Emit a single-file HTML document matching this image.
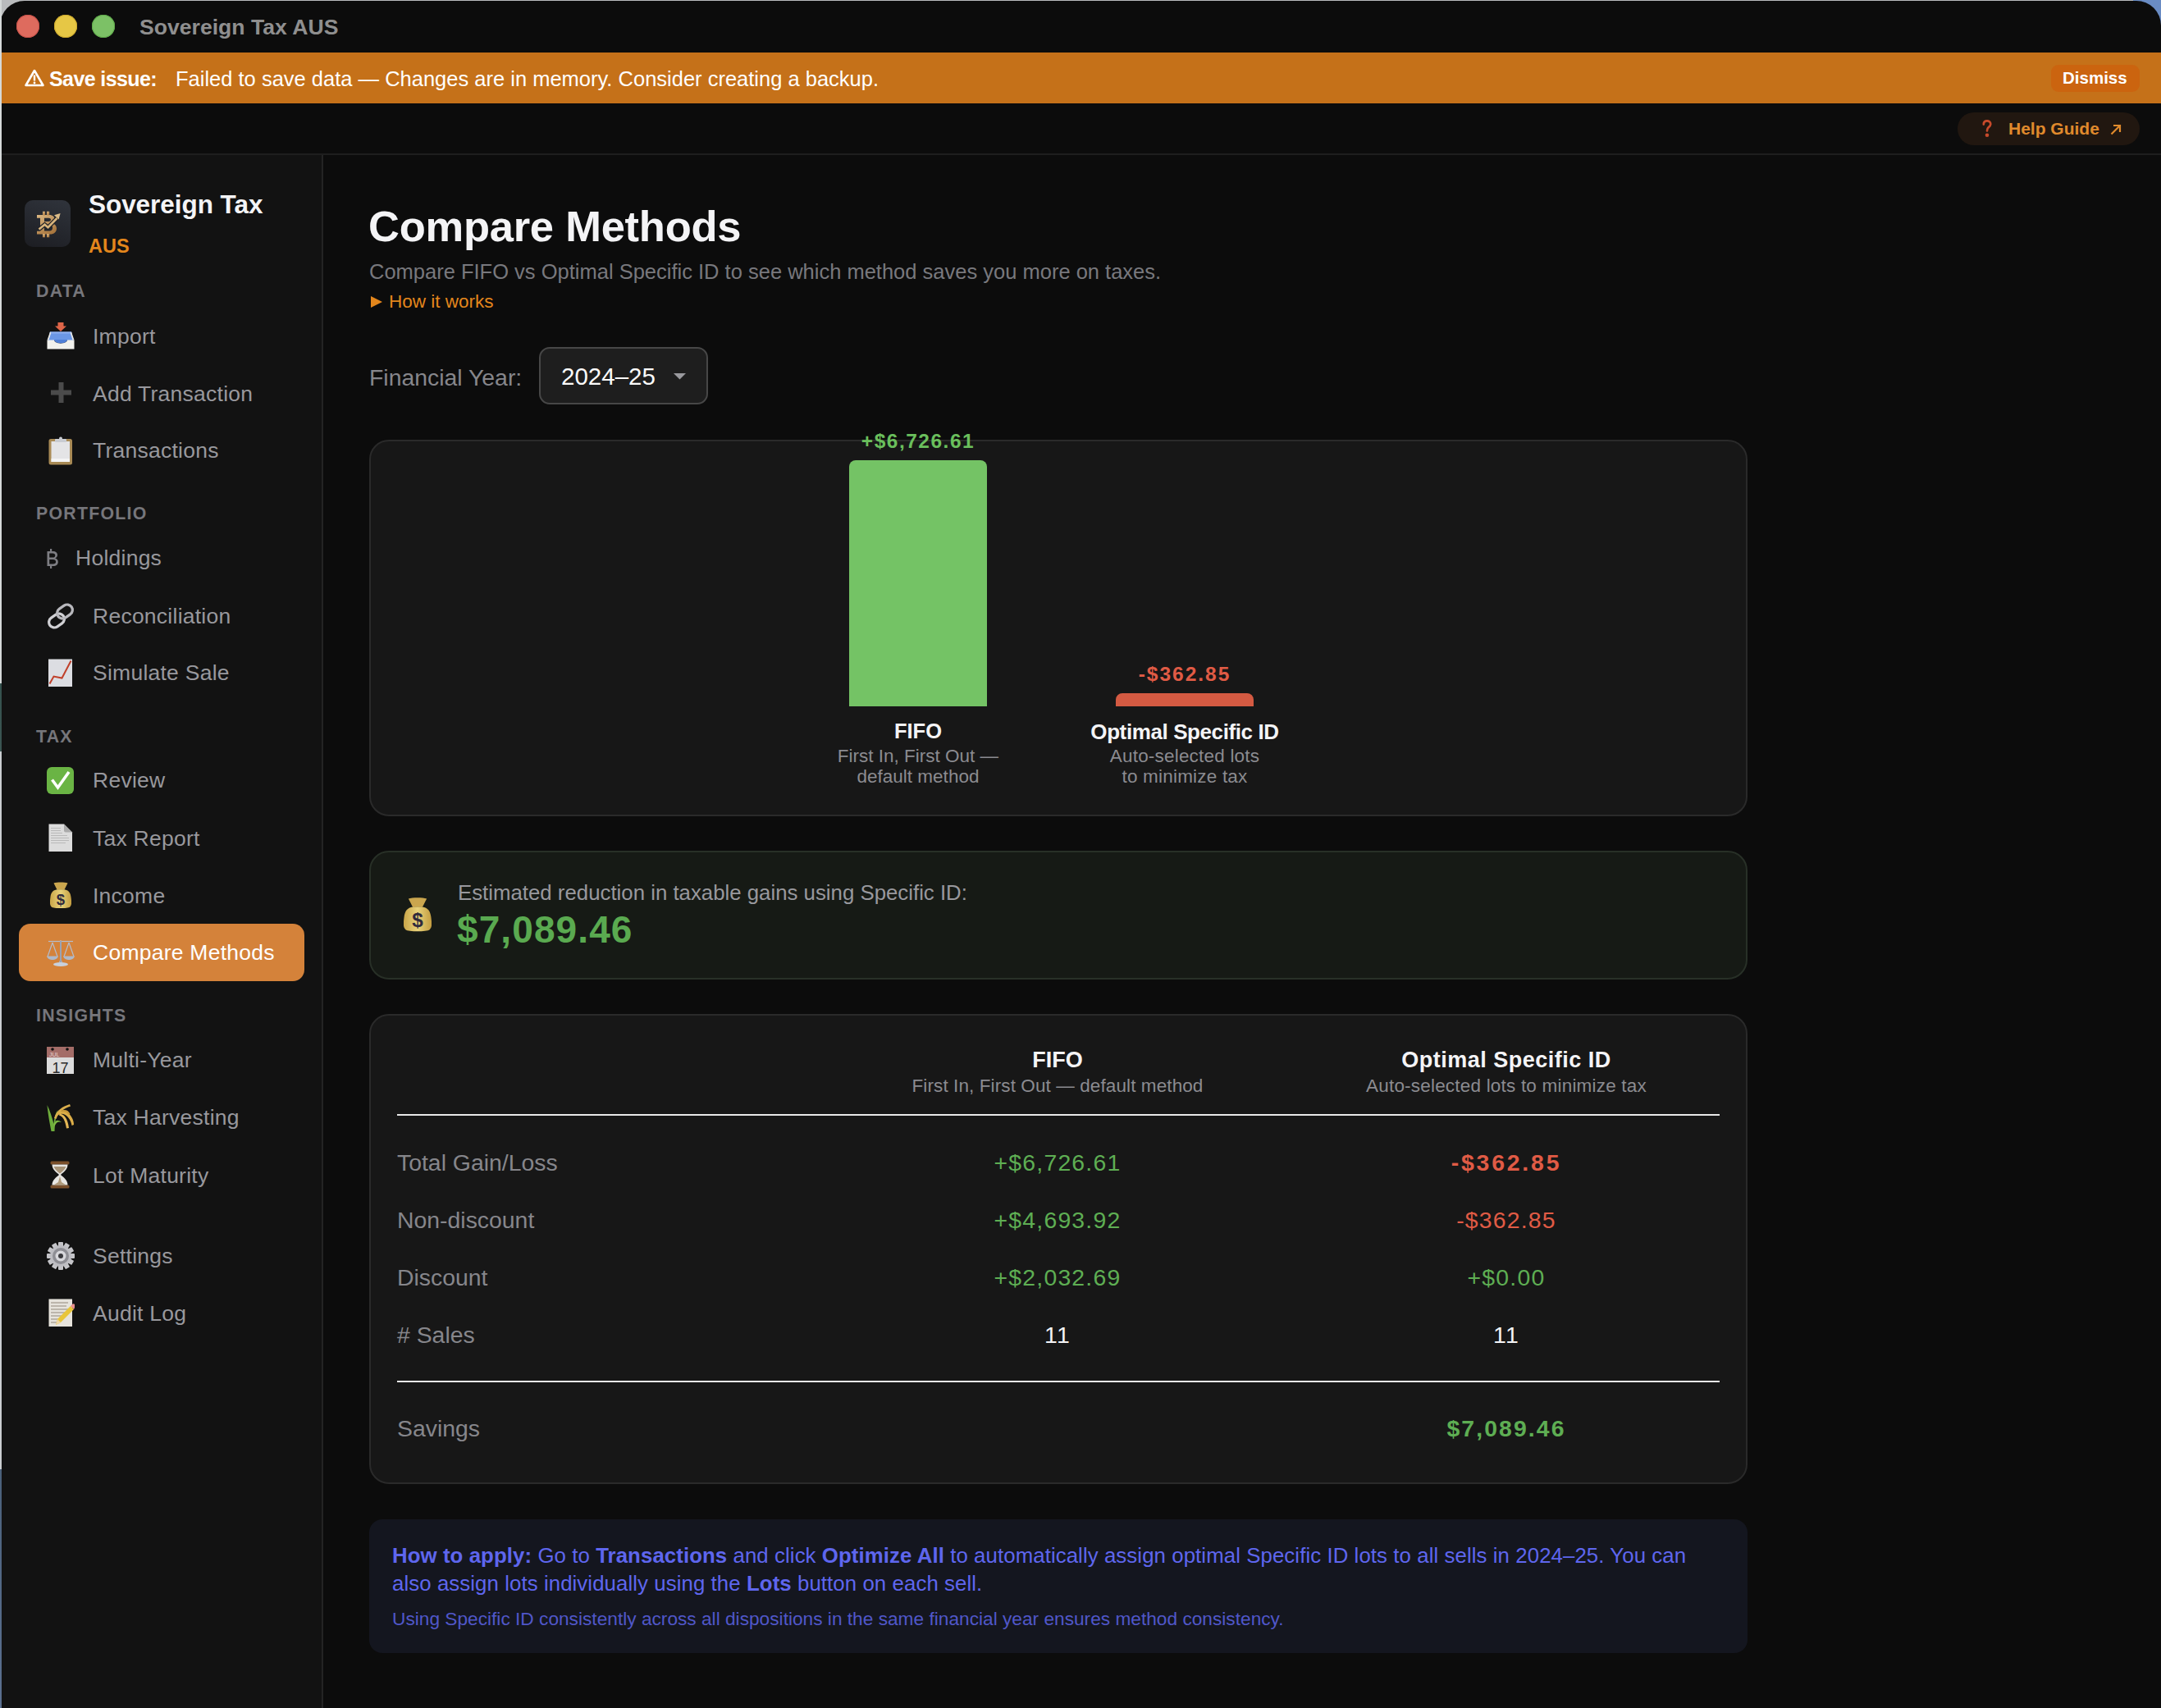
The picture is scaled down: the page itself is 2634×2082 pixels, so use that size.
<!DOCTYPE html>
<html><head><meta charset="utf-8">
<style>
*{box-sizing:border-box;margin:0;padding:0}
html,body{width:2634px;height:2082px;overflow:hidden;background:#b9bbbd;font-family:"Liberation Sans",sans-serif}
.a{position:absolute;white-space:nowrap;line-height:1}
#win{position:absolute;left:0;top:1px;width:2634px;height:2081px;background:#0c0c0c;border-radius:30px 30px 0 0;overflow:hidden}
#tr{position:absolute;left:2600px;top:0;width:34px;height:34px;background:#6a8cc4}
#strip{position:absolute;left:0;top:0;width:2px;height:2082px;background:linear-gradient(#d5d9d9 0,#d5d9d9 40%,#35524e 40%,#3b5552 44%,#c9cdd0 44%,#c9cdd0 86%,#4a607a 86%,#5b7090 100%)}
#side{position:absolute;left:0;top:188px;width:394px;height:1894px;background:#121212;border-right:2px solid #242424}
.sh{position:absolute;left:44px;font-weight:700;font-size:21.3px;letter-spacing:1.25px;color:#76767b;line-height:1;white-space:nowrap}
.it{position:absolute;left:113px;font-size:26.5px;letter-spacing:0.25px;color:#98989d;line-height:1;white-space:nowrap}
.ic{position:absolute}
.card{position:absolute;left:450px;width:1680px;background:#171717;border:2px solid #2a2a2a;border-radius:24px}
.g{color:#5eae53}.r{color:#e05b45}
</style></head><body>
<div id="tr"></div><div id="win">
  <!-- title bar -->
  <div class="a" style="left:20px;top:17px;width:28px;height:28px;border-radius:50%;background:#de6b5e;box-shadow:inset 0 0 0 1px #c9524a"></div>
  <div class="a" style="left:66px;top:17px;width:28px;height:28px;border-radius:50%;background:#e6c745;box-shadow:inset 0 0 0 1px #cda92c"></div>
  <div class="a" style="left:112px;top:17px;width:28px;height:28px;border-radius:50%;background:#7cc166;box-shadow:inset 0 0 0 1px #5fab4a"></div>
  <div class="a" style="left:170px;top:19px;font-weight:700;font-size:26.6px;color:#8f8f8f">Sovereign Tax AUS</div>

  <!-- banner -->
  <div class="a" style="left:0;top:63px;width:2634px;height:62px;background:#c57119"></div>
  <svg class="a" style="left:30px;top:83px" width="24" height="22" viewBox="0 0 24 22"><path d="M12 2 L22.5 20 H1.5 Z" fill="none" stroke="#fff" stroke-width="2.6" stroke-linejoin="round"/><rect x="10.8" y="7.5" width="2.4" height="7" fill="#fff"/><circle cx="12" cy="17" r="1.4" fill="#fff"/></svg>
  <div class="a" style="left:60px;top:83px;font-weight:700;font-size:25px;letter-spacing:-0.6px;color:#fff">Save issue:</div>
  <div class="a" style="left:214px;top:83px;font-size:25.5px;color:#fff">Failed to save data — Changes are in memory. Consider creating a backup.</div>
  <div class="a" style="left:2500px;top:78px;width:108px;height:33px;border-radius:9px;background:#cb640f"></div>
  <div class="a" style="left:2514px;top:84px;font-weight:700;font-size:20.5px;color:#fff">Dismiss</div>

  <!-- toolbar -->
  <div class="a" style="left:2386px;top:136px;width:222px;height:40px;border-radius:20px;background:#211710"></div>
  <svg class="a" style="left:2416px;top:145px" width="12" height="22" viewBox="0 0 12 22"><path d="M1.8 5.6 C1.8 2.8 3.6 1.3 6 1.3 C8.6 1.3 10.3 3 10.3 5.2 C10.3 7.3 9 8.3 7.6 9.4 C6.5 10.3 6 11.3 6 13.4" fill="none" stroke="#c74a2b" stroke-width="2.7" stroke-linecap="round"/><circle cx="6" cy="18.8" r="2.3" fill="#c74a2b"/></svg>
  <div class="a" style="left:2448px;top:145px;font-weight:700;font-size:21px;color:#e08a2c">Help Guide</div>
  <svg class="a" style="left:2571px;top:149px" width="16" height="16" viewBox="0 0 16 16"><path d="M2.5 13.5 L13 3 M5 3 H13 V11" fill="none" stroke="#e08a2c" stroke-width="2.2"/></svg>
  <div class="a" style="left:0;top:186px;width:2634px;height:2px;background:#1e1e1e"></div>

  <!-- sidebar -->
  <div id="side"></div>
  <div class="a" style="left:30px;top:243px;width:56px;height:57px;border-radius:10px;background:linear-gradient(200deg,#30343c,#1c1d22)"></div>
  <svg class="a" style="left:30px;top:243px" width="56" height="56" viewBox="0 0 56 56">
    <defs><linearGradient id="gold" x1="0" y1="0" x2="0.6" y2="1"><stop offset="0" stop-color="#dcb883"/><stop offset="1" stop-color="#a9773f"/></linearGradient></defs>
    <g fill="url(#gold)">
    <path fill-rule="evenodd" d="M15 18 H30 C34.5 18 36.5 20.5 36.5 23 C36.5 25.5 34.8 27.3 32.5 27.9 C36.8 28.6 39 31.2 39 34.5 C39 38.5 36 41.6 31 41.6 H15 V37.8 H19 V21.8 H15 Z M24 21.8 V25.9 H29.3 C30.9 25.9 32 25.1 32 23.8 C32 22.5 30.9 21.8 29.3 21.8 Z M24 30 V37.6 H30.5 C32.6 37.6 34.1 36.1 34.1 33.8 C34.1 31.5 32.6 30 30.5 30 Z"/>
    <rect x="22" y="13.7" width="3" height="4.6"/><rect x="27" y="13.7" width="3.2" height="4.6"/>
    <rect x="22" y="41" width="3" height="4.3"/><rect x="27" y="41" width="3.2" height="4.3"/>
    </g>
    <path d="M17.5 35.5 L24.5 29.8 L28.5 33.2 L39.5 22" fill="none" stroke="#202228" stroke-width="5.2"/>
    <path d="M17.5 35.5 L24.5 29.8 L28.5 33.2 L39.5 22" fill="none" stroke="#d8b47c" stroke-width="2.6"/>
    <path d="M36 18.2 L43.6 16 L41.6 23.6 Z" fill="#dcbd88"/>
  </svg>
  <div class="a" style="left:108px;top:233px;font-weight:700;font-size:31.5px;letter-spacing:-0.05px;color:#f4f4f6">Sovereign Tax</div>
  <div class="a" style="left:108px;top:288px;font-weight:700;font-size:23.5px;color:#e3861c">AUS</div>

  <div class="sh" style="top:344px">DATA</div>
  <div class="it" style="top:396px">Import</div>
  <div class="it" style="top:466px">Add Transaction</div>
  <div class="it" style="top:535px">Transactions</div>

  <div class="sh" style="top:615px">PORTFOLIO</div>
  <div class="it" style="top:666px;left:92px">Holdings</div>
  <div class="it" style="top:737px">Reconciliation</div>
  <div class="it" style="top:806px">Simulate Sale</div>

  <div class="sh" style="top:887px">TAX</div>
  <div class="it" style="top:937px">Review</div>
  <div class="it" style="top:1008px">Tax Report</div>
  <div class="it" style="top:1078px">Income</div>
  <div class="a" style="left:23px;top:1125px;width:348px;height:70px;border-radius:14px;background:#d4823a"></div>
  <div class="it" style="top:1147px;color:#fff">Compare Methods</div>

  <div class="sh" style="top:1227px">INSIGHTS</div>
  <div class="it" style="top:1278px">Multi-Year</div>
  <div class="it" style="top:1348px">Tax Harvesting</div>
  <div class="it" style="top:1419px">Lot Maturity</div>

  <div class="it" style="top:1517px">Settings</div>
  <div class="it" style="top:1587px">Audit Log</div>
    <!-- import tray -->
  <svg class="ic" style="left:56px;top:390px" width="36" height="36" viewBox="0 0 36 36">
    <path d="M14.5 2 H21.5 V6.5 H25 L18 13 L11 6.5 H14.5 Z" fill="#de6548"/>
    <path d="M5 13.5 H31 L33.5 24 H2.5 Z" fill="#6b97e6"/>
    <path d="M5 13.5 H31 L31.5 15.5 H4.5 Z" fill="#8fb0ee"/>
    <path d="M10 23 C10.5 29 25.5 29 26 23 Z" fill="#4f7fd8"/>
    <path d="M1.5 23.5 H10 C10.5 29 25.5 29 26 23.5 H34.5 V34.5 H1.5 Z" fill="#f1f1ed"/>
    <path d="M5 13.5 L1.5 23.5 H3.5 L6.3 14.8 Z M31 13.5 L34.5 23.5 H32.5 L29.7 14.8 Z" fill="#e9e9e5"/>
  </svg>
  <!-- plus -->
  <svg class="ic" style="left:62px;top:465px" width="25" height="25" viewBox="0 0 25 25"><path d="M9.5 0 H15.5 V9.5 H25 V15.5 H15.5 V25 H9.5 V15.5 H0 V9.5 H9.5 Z" fill="#4b4b4b"/></svg>
  <!-- clipboard -->
  <svg class="ic" style="left:59px;top:531px" width="30" height="35" viewBox="0 0 30 35">
    <rect x="0.5" y="3" width="28.5" height="31.5" rx="2.5" fill="#a88a55"/>
    <rect x="3.5" y="6" width="22.5" height="25" fill="#e4e4e6"/>
    <rect x="3.5" y="27" width="22.5" height="4" fill="#f4f4f4"/>
    <rect x="8" y="3" width="14" height="4" rx="1" fill="#c9ccd2"/>
    <circle cx="15" cy="2.5" r="2" fill="#c9ccd2"/>
  </svg>
  <!-- bitcoin glyph -->
  <svg class="ic" style="left:56px;top:667px" width="16" height="26" viewBox="0 0 16 26">
    <path fill="#7d7d82" fill-rule="evenodd" d="M1.5 4 H8.5 C12 4 14 5.8 14 8.6 C14 10.6 12.9 11.9 11.2 12.4 C13.4 12.9 14.8 14.5 14.8 16.9 C14.8 20 12.6 22 8.8 22 H1.5 Z M4.2 6.4 V11.6 H8.2 C10.2 11.6 11.3 10.6 11.3 9 C11.3 7.4 10.2 6.4 8.2 6.4 Z M4.2 13.9 V19.6 H8.6 C10.9 19.6 12.1 18.6 12.1 16.8 C12.1 14.9 10.9 13.9 8.6 13.9 Z"/>
    <rect x="5" y="1" width="2.2" height="3.5" fill="#7d7d82"/><rect x="5" y="21.5" width="2.2" height="3.5" fill="#7d7d82"/>
  </svg>
  <!-- link -->
  <svg class="ic" style="left:56px;top:732px" width="36" height="36" viewBox="0 0 36 36">
    <g fill="none" stroke-width="3.2">
      <rect x="3" y="17" width="20" height="13" rx="6.5" transform="rotate(-35 13 23.5)" stroke="#d0d0d4"/>
      <rect x="13" y="6" width="20" height="13" rx="6.5" transform="rotate(-35 23 12.5)" stroke="#b8b8bd"/>
    </g>
  </svg>
  <!-- chart -->
  <svg class="ic" style="left:59px;top:802px" width="30" height="35" viewBox="0 0 30 35">
    <rect x="0" y="0.5" width="29" height="33.5" fill="#dcdde2"/>
    <path d="M1.5 30.5 L6.5 21.5 L16.5 23.5 L27.5 2.5" fill="none" stroke="#c0402a" stroke-width="2"/>
  </svg>
  <!-- check -->
  <svg class="ic" style="left:57px;top:934px" width="34" height="34" viewBox="0 0 34 34">
    <rect x="0" y="0" width="33" height="33" rx="6" fill="#6ab444"/>
    <path d="M6.5 15.5 L13.5 25 L27 6" fill="none" stroke="#fff" stroke-width="3.6"/>
  </svg>
  <!-- page -->
  <svg class="ic" style="left:59px;top:1003px" width="30" height="35" viewBox="0 0 30 35">
    <path d="M0.5 0.5 H19 L29 10.5 V34 H0.5 Z" fill="#dcdcdc"/>
    <path d="M19 0.5 L29 10.5 H21 C19.8 10.5 19 9.7 19 8.5 Z" fill="#aaaaaa"/>
    <g fill="#b9b9b9"><rect x="3" y="5" width="12" height="1"/><rect x="3" y="8" width="12" height="1"/><rect x="3" y="11" width="14" height="1"/><rect x="3" y="14" width="20" height="1"/><rect x="3" y="17" width="22" height="1"/><rect x="3" y="20" width="22" height="1"/><rect x="3" y="23" width="18" height="1"/></g>
  </svg>
  <!-- money bag -->
  <svg class="ic" style="left:61px;top:1074px" width="26" height="33" viewBox="0 0 26 33"><defs><linearGradient id="bagg" x1="0" y1="0" x2="1" y2="0"><stop offset="0" stop-color="#c9a548"/><stop offset="0.5" stop-color="#e8d27a"/><stop offset="1" stop-color="#c29c40"/></linearGradient></defs>
    <path d="M4.5 1.5 C8 0.3 18 0.3 21.5 1.5 L17.5 9.5 H8.5 Z" fill="#caa64e"/>
    <path d="M8.5 9.2 H17.5 C22.5 10 25 13 25.6 19 C26.2 24 26.8 28 24.2 30.4 C21.5 32.6 4.5 32.6 1.8 30.4 C-0.8 28 -0.2 24 0.4 19 C1 13 3.5 10 8.5 9.2 Z" fill="url(#bagg)"/>
    <text x="13" y="28" text-anchor="middle" font-family="Liberation Sans" font-weight="700" font-size="18.5" fill="#2f2a3c">$</text>
  </svg>
  <!-- scales (active) -->
  <svg class="ic" style="left:57px;top:1144px" width="34" height="34" viewBox="0 0 34 34">
    <g stroke="#b5bccb" fill="none" stroke-width="1.2">
      <path d="M2 2.5 H32"/><path d="M17 1 V28"/>
      <path d="M7 4 L1 21 M7 4 L13 21 M27 4 L21 21 M27 4 L33 21"/>
    </g>
    <path d="M0 20.5 H14 C13 24 10 25 7 25 C4 25 1 24 0 20.5 Z" fill="#aeb8c8"/>
    <path d="M20 20.5 H34 C33 24 30 25 27 25 C24 25 21 24 20 20.5 Z" fill="#aeb8c8"/>
    <path d="M15.5 26 H18.5 L19 29 H15 Z" fill="#aeb8c8"/>
    <ellipse cx="17" cy="30.5" rx="9" ry="2.5" fill="#c8d0dc"/>
    <rect x="16" y="2" width="2" height="26" fill="#9aa3b4"/>
  </svg>
  <!-- calendar -->
  <svg class="ic" style="left:57px;top:1275px" width="34" height="34" viewBox="0 0 34 34">
    <rect x="0" y="0" width="33" height="13" fill="#a46d68"/>
    <rect x="0" y="13" width="33" height="20" fill="#dcdcdc"/>
    <circle cx="7" cy="3" r="1.8" fill="#111"/><circle cx="25" cy="3" r="1.8" fill="#111"/>
    <text x="3" y="11.5" font-family="Liberation Sans" font-size="7" fill="#e8d5d3">JUL</text>
    <text x="16.5" y="31.5" text-anchor="middle" font-family="Liberation Sans" font-size="18" fill="#2a2a2a">17</text>
  </svg>
  <!-- rice -->
  <svg class="ic" style="left:57px;top:1344px" width="34" height="36" viewBox="0 0 34 36">
    <path d="M5.5 34 C4 26 1.5 14 0.5 2 C4 9 6.5 17 8.5 25 C9 18 10.5 12 13.5 8 C11.5 15 10 23 9.5 34 Z" fill="#6fae3c"/>
    <path d="M8.5 26 C10 21 13 19 18 23 C14 21.5 11.5 23 9.5 28 Z" fill="#7fbb44"/>
    <path d="M9 18 C12 8 19 4 28 1 L29 3.5 C21 6 15 10 11.5 19 Z" fill="#d9ad4c"/>
    <path d="M12 13 C17 8 22 8 26 11.5 C30 15.5 33 20 33 26 L30.5 27 C29.5 21 26.5 16.5 22.5 14 C19 12 15.5 12.5 13 15 Z" fill="#dcae48"/>
    <path d="M15.5 12.5 C21 13 25.5 18 27 30 L24 30.5 C22.5 21 20 16 15 14.5 Z" fill="#e3b655"/>
    <path d="M18 8.5 C23 7 27 9 28.5 13 L26.5 14 C25 11 22 9.5 18.5 10.5 Z" fill="#c99a3a"/>
  </svg>
  <!-- hourglass -->
  <svg class="ic" style="left:61px;top:1414px" width="25" height="34" viewBox="0 0 25 34">
    <rect x="0.5" y="0.5" width="23" height="4" rx="1.5" fill="#7a4f2a"/>
    <rect x="0.5" y="29.5" width="23" height="4" rx="1.5" fill="#7a4f2a"/>
    <path d="M2.5 4.5 H21.5 C21.5 11 16 14 13 17 C16 20 21.5 23 21.5 29.5 H2.5 C2.5 23 8 20 11 17 C8 14 2.5 11 2.5 4.5 Z" fill="#e8e6e2"/>
    <path d="M4.5 7 H19.5 C18 11 15 13 12 15.5 C9 13 6 11 4.5 7 Z" fill="#a89478"/>
    <path d="M12 19 L14 26 L19.5 29.5 H4.5 L10 26 Z" fill="#b09a7a"/>
  </svg>
  <!-- gear -->
  <svg class="ic" style="left:56px;top:1512px" width="36" height="36" viewBox="0 0 36 36">
    <g transform="translate(18 18)">
      <g fill="#c4c4c8">
        <rect x="-3" y="-17" width="6" height="34" rx="1"/>
        <rect x="-3" y="-17" width="6" height="34" rx="1" transform="rotate(30)"/>
        <rect x="-3" y="-17" width="6" height="34" rx="1" transform="rotate(60)"/>
        <rect x="-3" y="-17" width="6" height="34" rx="1" transform="rotate(90)"/>
        <rect x="-3" y="-17" width="6" height="34" rx="1" transform="rotate(120)"/>
        <rect x="-3" y="-17" width="6" height="34" rx="1" transform="rotate(150)"/>
      </g>
      <circle r="13" fill="#bdbdc2"/>
      <circle r="10" fill="#8e8e94"/>
      <circle r="6.5" fill="#d8d8dc"/>
      <circle r="3" fill="#3a3a3e"/>
    </g>
  </svg>
  <!-- memo -->
  <svg class="ic" style="left:59px;top:1582px" width="32" height="35" viewBox="0 0 32 35">
    <rect x="0.5" y="0.5" width="28.5" height="33.5" fill="#e6e3dc"/>
    <g stroke="#8a8070" stroke-width="0.9"><path d="M3 5 H24"/><path d="M3 9 H22"/><path d="M3 13 H25"/><path d="M3 17 H20"/><path d="M3 21 H16"/><path d="M3 25 H12"/><path d="M3 29 H10"/></g>
    <path d="M9 32 L11 25 L27 9 L31 13 L15 29 Z" fill="#e8c53a"/>
    <path d="M27 9 L29 7 C30 6 31 6 32 7 L32.5 8 C33 9 33 10 32 11 L31 13 Z" fill="#e88d8d"/>
    <path d="M9 32 L11 25 L15 29 Z" fill="#f0d9a8"/>
  </svg>


    <!-- header -->
  <div class="a" style="left:449px;top:249px;font-weight:700;font-size:52.5px;letter-spacing:-0.25px;color:#f4f4f6">Compare Methods</div>
  <div class="a" style="left:450px;top:318px;font-size:25.5px;color:#78787d">Compare FIFO vs Optimal Specific ID to see which method saves you more on taxes.</div>
  <svg class="a" style="left:451px;top:359px" width="16" height="16" viewBox="0 0 16 16"><path d="M1 1 L15 8 L1 15 Z" fill="#e3861c"/></svg>
  <div class="a" style="left:474px;top:356px;font-size:22.5px;color:#e3861c">How it works</div>
  <div class="a" style="left:450px;top:445px;font-size:28.4px;color:#86868b">Financial Year:</div>
  <div class="a" style="left:657px;top:422px;width:206px;height:70px;border-radius:13px;background:#1e1e1e;border:2px solid #474747"></div>
  <div class="a" style="left:684px;top:443px;font-size:29.5px;color:#fafafa">2024–25</div>
  <svg class="a" style="left:821px;top:454px" width="15" height="8" viewBox="0 0 15 8"><path d="M0 0 H15 L7.5 7.5 Z" fill="#9a9a9e"/></svg>

  <!-- chart card -->
  <div class="card" style="top:535px;height:459px"></div>
  <div class="a" style="left:1035px;top:560px;width:168px;height:300px;border-radius:8px 8px 0 0;background:#74c365"></div>
  <div class="a" style="left:1360px;top:844px;width:168px;height:16px;border-radius:8px 8px 0 0;background:#d45a42"></div>
  <div class="a g" style="left:1019px;width:200px;text-align:center;top:525px;font-weight:700;font-size:24.5px;letter-spacing:1.5px;color:#6abf5c">+$6,726.61</div>
  <div class="a r" style="left:1344px;width:200px;text-align:center;top:809px;font-weight:700;font-size:24.5px;letter-spacing:2px">-$362.85</div>
  <div class="a" style="left:969px;width:300px;text-align:center;top:878px;font-weight:700;font-size:25.5px;color:#f4f4f6">FIFO</div>
  <div class="a" style="left:969px;width:300px;text-align:center;top:908px;font-size:22.5px;letter-spacing:0px;color:#8b8b90;line-height:25px;white-space:normal">First In, First Out —<br>default method</div>
  <div class="a" style="left:1244px;width:400px;text-align:center;top:878px;font-weight:700;font-size:26px;letter-spacing:-0.4px;color:#f4f4f6">Optimal Specific ID</div>
  <div class="a" style="left:1244px;width:400px;text-align:center;top:908px;font-size:22.5px;letter-spacing:0.2px;color:#8b8b90;line-height:25px;white-space:normal">Auto-selected lots<br>to minimize tax</div>

  <!-- savings card -->
  <div class="card" style="top:1036px;height:157px;background:#161a15;border-color:#283027"></div>
  <svg class="ic" style="left:492px;top:1092px" width="34" height="44" viewBox="0 0 26 33"><defs><linearGradient id="bagg" x1="0" y1="0" x2="1" y2="0"><stop offset="0" stop-color="#c9a548"/><stop offset="0.5" stop-color="#e8d27a"/><stop offset="1" stop-color="#c29c40"/></linearGradient></defs>
    <path d="M4.5 1.5 C8 0.3 18 0.3 21.5 1.5 L17.5 9.5 H8.5 Z" fill="#caa64e"/>
    <path d="M8.5 9.2 H17.5 C22.5 10 25 13 25.6 19 C26.2 24 26.8 28 24.2 30.4 C21.5 32.6 4.5 32.6 1.8 30.4 C-0.8 28 -0.2 24 0.4 19 C1 13 3.5 10 8.5 9.2 Z" fill="url(#bagg)"/>
    <text x="13" y="28" text-anchor="middle" font-family="Liberation Sans" font-weight="700" font-size="18.5" fill="#2f2a3c">$</text>
  </svg>
  <div class="a" style="left:558px;top:1075px;font-size:25.8px;color:#98989d">Estimated reduction in taxable gains using Specific ID:</div>
  <div class="a" style="left:557px;top:1109px;font-weight:700;font-size:46px;letter-spacing:1.1px;color:#5aaa50">$7,089.46</div>

  <!-- table card -->
  <div class="card" style="top:1235px;height:573px"></div>
  <div class="a" style="left:1039px;width:500px;text-align:center;top:1278px;font-weight:700;font-size:27px;color:#f4f4f6">FIFO</div>
  <div class="a" style="left:1039px;width:500px;text-align:center;top:1312px;font-size:22.5px;letter-spacing:0.1px;color:#8b8b90">First In, First Out — default method</div>
  <div class="a" style="left:1586px;width:500px;text-align:center;top:1278px;font-weight:700;font-size:27px;letter-spacing:0.5px;color:#f4f4f6">Optimal Specific ID</div>
  <div class="a" style="left:1586px;width:500px;text-align:center;top:1312px;font-size:22.5px;letter-spacing:0.2px;color:#8b8b90">Auto-selected lots to minimize tax</div>
  <div class="a" style="left:484px;top:1357px;width:1612px;height:2px;background:#e8e8e8"></div>

  <div class="a" style="left:484px;top:1402px;font-size:28.4px;color:#86868b">Total Gain/Loss</div>
  <div class="a g" style="left:1039px;width:500px;text-align:center;top:1402px;font-size:28.4px;letter-spacing:1.2px">+$6,726.61</div>
  <div class="a r" style="left:1586px;width:500px;text-align:center;top:1402px;font-weight:700;font-size:28.4px;letter-spacing:2.8px">-$362.85</div>

  <div class="a" style="left:484px;top:1472px;font-size:28.4px;color:#86868b">Non-discount</div>
  <div class="a g" style="left:1039px;width:500px;text-align:center;top:1472px;font-size:28.4px;letter-spacing:1.2px">+$4,693.92</div>
  <div class="a r" style="left:1586px;width:500px;text-align:center;top:1472px;font-size:28.4px;letter-spacing:1.2px">-$362.85</div>

  <div class="a" style="left:484px;top:1542px;font-size:28.4px;color:#86868b">Discount</div>
  <div class="a g" style="left:1039px;width:500px;text-align:center;top:1542px;font-size:28.4px;letter-spacing:1.2px">+$2,032.69</div>
  <div class="a g" style="left:1586px;width:500px;text-align:center;top:1542px;font-size:28.4px;letter-spacing:1.2px">+$0.00</div>

  <div class="a" style="left:484px;top:1612px;font-size:28.4px;color:#86868b"># Sales</div>
  <div class="a" style="left:1039px;width:500px;text-align:center;top:1612px;font-size:28.4px;letter-spacing:1.2px;color:#f4f4f6">11</div>
  <div class="a" style="left:1586px;width:500px;text-align:center;top:1612px;font-size:28.4px;letter-spacing:1.2px;color:#f4f4f6">11</div>

  <div class="a" style="left:484px;top:1682px;width:1612px;height:2px;background:#e8e8e8"></div>
  <div class="a" style="left:484px;top:1726px;font-size:28.4px;color:#86868b">Savings</div>
  <div class="a g" style="left:1586px;width:500px;text-align:center;top:1726px;font-weight:700;font-size:28.4px;letter-spacing:2.1px">$7,089.46</div>

  <!-- how to apply -->
  <div class="a" style="left:450px;top:1851px;width:1680px;height:163px;border-radius:16px;background:#14161f"></div>
  <div class="a" style="left:478px;top:1878px;font-size:25.8px;letter-spacing:0.08px;color:#5e66ee;line-height:34px;white-space:normal;width:1640px"><b>How to apply:</b> Go to <b>Transactions</b> and click <b>Optimize All</b> to automatically assign optimal Specific ID lots to all sells in 2024–25. You can<br>also assign lots individually using the <b>Lots</b> button on each sell.</div>
  <div class="a" style="left:478px;top:1961px;font-size:22.7px;color:#5057c9">Using Specific ID consistently across all dispositions in the same financial year ensures method consistency.</div>

</div>
<div id="strip"></div>
</body></html>
